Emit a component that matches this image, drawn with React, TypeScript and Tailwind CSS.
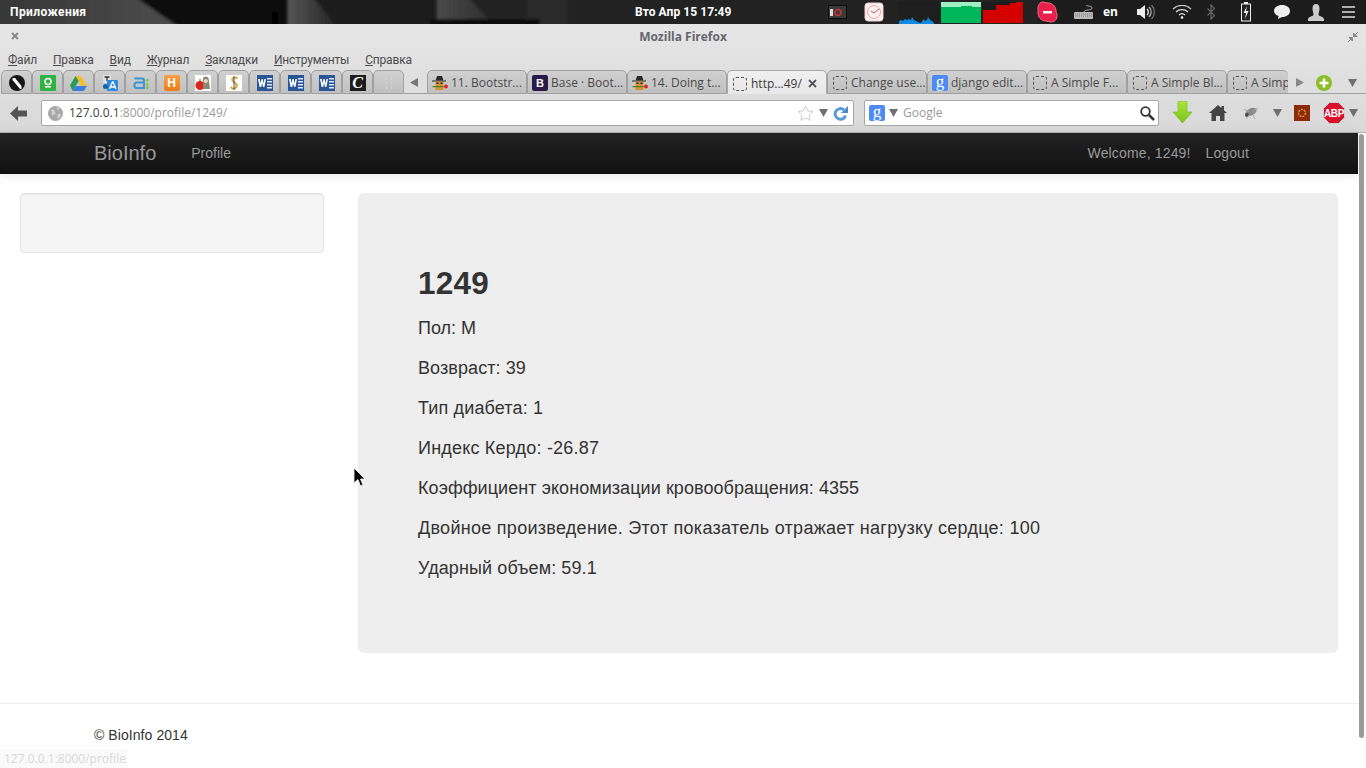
import React from "react";

const ui = { fontFamily: '"Open Sans", "Noto Sans", sans-serif' };
const cyr = { fontFamily: 'Roboto, "Noto Sans", sans-serif' };
const page = { fontFamily: '"Liberation Sans", Arial, sans-serif' };

function Dashed() {
  return (
    <div className="flex w-[16px] shrink-0 justify-center">
      <div className="h-[14px] w-[14px] rounded-[3px] border border-dashed border-[#555]" />
    </div>
  );
}

function Spy() {
  return (
    <svg width="16" height="16" viewBox="0 0 16 16" className="shrink-0">
      <path d="M0 5.500h14v1H0z" fill="#222" />
      <path d="M3.500 5.500L5 1h5l1.500 4.500z" fill="#2b2b2b" />
      <rect x="3.500" y="6.500" width="8" height="8.500" fill="#d69433" />
      <rect x="4.500" y="7.500" width="2" height="1.500" fill="#222" />
      <rect x="8.500" y="7.500" width="2" height="1.500" fill="#222" />
      <rect x="0.500" y="11" width="11" height="1.200" fill="#4c7a20" />
      <circle cx="14" cy="11.500" r="2" fill="#e8202c" />
    </svg>
  );
}

function GoogleIcon() {
  return (
    <div
      className="flex h-4 w-4 shrink-0 items-start justify-center rounded-[2px] bg-[#4c8bf5] text-[17px] leading-[13px] text-white"
      style={{ fontFamily: '"Liberation Serif", serif' }}
    >
      g
    </div>
  );
}

function WordIcon() {
  return (
    <svg width="16" height="16" viewBox="0 0 16 16">
      <rect x="0" y="0" width="16" height="16" fill="#2a5699" />
      <rect x="10" y="3" width="5" height="1.500" fill="#dfe8f5" />
      <rect x="10" y="6" width="5" height="1.500" fill="#dfe8f5" />
      <rect x="10" y="9" width="5" height="1.500" fill="#dfe8f5" />
      <rect x="10" y="12" width="5" height="1.500" fill="#dfe8f5" />
      <path d="M1 4h1.800l.8 4.500L4.500 4h1.200l.9 4.500L7.400 4H9l-1.600 8H6L5.100 8 4.200 12H2.600z" fill="#fff" />
    </svg>
  );
}

const pinnedIcons = [
  <svg width="16" height="16" viewBox="0 0 16 16"><circle cx="8" cy="8" r="8" fill="#161616" /><path d="M3.500 3h2.500l6.500 8v3h-1.500L3.500 5z" fill="#fff" /></svg>,
  <svg width="16" height="16" viewBox="0 0 16 16"><rect width="16" height="16" rx="1" fill="#2fb344" /><circle cx="8" cy="6.500" r="3" fill="none" stroke="#fff" strokeWidth="1.500" /><rect x="5" y="11" width="6" height="1.500" fill="#fff" /></svg>,
  <svg width="17" height="15" viewBox="0 0 17 15"><path d="M5.500 0h5.500l6 10h-5.500z" fill="#f6c02c" /><path d="M5.500 0L0 9.500 2.700 15l6-10z" fill="#2c9a55" /><path d="M2.700 15h11l3.300-5H5.800z" fill="#3c7be0" /></svg>,
  <svg width="16" height="16" viewBox="0 0 16 16"><rect x="1" y="0" width="8" height="8" fill="#e4e4e4" /><path d="M2.500 2h5M5 2v4" stroke="#333" strokeWidth="1.300" /><rect x="5" y="5" width="11" height="11" rx="1" fill="#2a8ae0" /><path d="M7.500 14l3-7h.5l3 7M9 12h4" stroke="#fff" strokeWidth="1.300" fill="none" /><circle cx="3.500" cy="11.500" r="2.500" fill="#1a5fa8" /></svg>,
  <svg width="16" height="14" viewBox="0 0 16 14"><path d="M1.500 2.500h7.500a2 2 0 0 1 2 2V12H3.500a2 2 0 0 1-2-2V8.500a2 2 0 0 1 2-2H11" fill="none" stroke="#3d94d6" strokeWidth="2" /><rect x="13" y="3" width="2.500" height="2.500" fill="#8cbf3f" /><rect x="13" y="7" width="2.500" height="2.500" fill="#8cbf3f" /><rect x="13" y="10.500" width="2.500" height="2.500" fill="#8cbf3f" /></svg>,
  <div className="flex h-4 w-4 items-center justify-center rounded-[2px] bg-gradient-to-b from-[#f9a040] to-[#ef7a1a] text-[12px] font-bold leading-none text-white" style={page}>H</div>,
  <svg width="16" height="16" viewBox="0 0 16 16"><rect width="16" height="16" fill="#fff" /><circle cx="5" cy="10.500" r="4.500" fill="#d8281e" /><path d="M8 3a3.200 3.200 0 0 1 5.500 0l1.500 11H8z" fill="#8d8478" /><circle cx="10.800" cy="6" r="2" fill="#e8dcc8" /><path d="M5 6v-2" stroke="#3a7a20" /></svg>,
  <svg width="16" height="16" viewBox="0 0 16 16"><rect width="16" height="16" fill="#fff" /><path d="M11.500 3.500C9 1.500 5.500 3 6.500 5.500S12 8 10.500 11.500 6 14 4.500 12" fill="none" stroke="#d2ac20" strokeWidth="2" /><path d="M8 1v14" stroke="#5a3f9c" /></svg>,
  <WordIcon />,
  <WordIcon />,
  <WordIcon />,
  <div className="flex h-4 w-4 items-center justify-center bg-[#1c1c1c] text-[16px] font-bold italic leading-none text-white" style={{ fontFamily: '"Liberation Serif", serif' }}>C</div>,
  <div className="h-3 w-[6px] border-x border-dashed border-[#d4d4d4]" />,
];

const tabs = [
  { title: "11. Bootstr...", icon: <Spy /> },
  { title: "Base · Boot...", icon: <div className="flex h-4 w-4 shrink-0 items-center justify-center rounded-[2px] bg-[#2a1a4a] text-[11px] font-bold leading-none text-white" style={page}>B</div> },
  { title: "14. Doing t...", icon: <Spy /> },
  { title: "http...49/", icon: <Dashed />, active: true },
  { title: "Change use...", icon: <Dashed /> },
  { title: "django edit...", icon: <GoogleIcon /> },
  { title: "A Simple F...", icon: <Dashed /> },
  { title: "A Simple Bl...", icon: <Dashed /> },
];

function Tab({ title, icon, active }: { title: string; icon: React.ReactNode; active?: boolean }) {
  return (
    <div
      className={
        active
          ? "flex h-[24px] w-[100px] shrink-0 items-center gap-[3px] rounded-t-[5px] border border-b-0 border-[#a8a8a8] bg-gradient-to-b from-[#f0f0f0] to-[#e8e8e8] pl-[4px] pt-[2px] text-[12px] text-[#3c3c3c]"
          : "flex h-[24px] w-[100px] shrink-0 items-center gap-[3px] rounded-t-[5px] border border-[#a0a0a0] bg-gradient-to-b from-[#d0d0d0] to-[#c0c0c0] pl-[4px] pt-[2px] text-[12px] text-[#4a4a4a]"
      }
    >
      {icon}
      <span className="whitespace-nowrap">{title}</span>
      {active && (
        <svg className="ml-auto mr-[9px]" width="9" height="9" viewBox="0 0 9 9">
          <path d="M1 1l7 7M8 1L1 8" stroke="#555" strokeWidth="1.800" />
        </svg>
      )}
    </div>
  );
}

function Wallpaper() {
  return (
    <svg className="absolute inset-0" width="1366" height="24" viewBox="0 0 1366 24" preserveAspectRatio="none">
      <defs>
        <linearGradient id="g1" x1="0" x2="1" y1="0" y2="0">
          <stop offset="0" stopColor="#363636" />
          <stop offset="1" stopColor="#4c4c4c" />
        </linearGradient>
        <linearGradient id="g2" x1="0" x2="1" y1="0" y2="0">
          <stop offset="0" stopColor="#555" />
          <stop offset="1" stopColor="#222" />
        </linearGradient>
        <linearGradient id="g3" x1="0" x2="1" y1="0" y2="0">
          <stop offset="0" stopColor="#4a4a4a" />
          <stop offset="1" stopColor="#2a2a2a" />
        </linearGradient>
        <filter id="soft">
          <feGaussianBlur stdDeviation="1.500" />
        </filter>
      </defs>
      <rect width="1366" height="24" fill="#222" />
      <g filter="url(#soft)">
        <path d="M-4 -4h138l46 32H-4z" fill="url(#g1)" />
        <path d="M134 -4h154v32H180z" fill="#101010" />
        <path d="M288 -4h24l26 32h-50z" fill="url(#g2)" />
        <path d="M312 -4h125v32H338z" fill="#1a1a1a" />
        <path d="M437 -4h30l30 32h-60z" fill="url(#g3)" />
        <path d="M467 -4h60v32h-30z" fill="#232323" />
        <rect x="527" y="-4" width="40" height="32" fill="#2a2a2a" />
        <rect x="272" y="12" width="6" height="14" fill="#050505" />
        <rect x="430" y="19" width="110" height="8" fill="#111" />
        <rect x="1040" y="-4" width="330" height="32" fill="#1c1c1c" />
      </g>
    </svg>
  );
}

function TopBar() {
  return (
    <div className="relative flex h-[24px] shrink-0 items-center text-[12px] font-bold text-white" style={cyr}>
      <Wallpaper />
      <span className="relative ml-[10px] w-[625px] tracking-[0.4px]">Приложения</span>
      <span className="relative w-[193px] whitespace-nowrap tracking-[0.07px]">Вто Апр 15 17:49</span>

      <svg className="relative" width="20" height="14" viewBox="0 0 20 14">
        <rect x="0.500" y="0.500" width="18" height="13" fill="#3a3a3a" stroke="#0c0c0c" />
        <rect x="2" y="4" width="3" height="7" fill="#ddd" />
        <circle cx="10" cy="7.500" r="3" fill="none" stroke="#d03030" strokeWidth="1.500" />
      </svg>
      <svg className="relative ml-[16px]" width="20" height="20" viewBox="0 0 20 20">
        <rect x="1" y="1" width="18" height="18" rx="3" fill="#fbf2f2" stroke="#eecccc" />
        <circle cx="10" cy="10" r="6.500" fill="none" stroke="#e8a0a0" />
        <path d="M10 11l5-4M10 11l-3-2" stroke="#c55" />
      </svg>

      <svg className="relative ml-[15px]" width="40" height="23" viewBox="0 0 40 23">
        <rect width="40" height="23" fill="#1e1e1e" />
        <path d="M0 23v-3l2-1 2 1 2-2 2 1 2-1 2 1 1-3 2 3 2 1 2 1 2 1 2-1 1-3 2 2 2-1 1-3 2 3 2 1 2 2v2z" fill="#0f8ae0" />
      </svg>
      <svg className="relative ml-[2px]" width="40" height="21" viewBox="0 0 40 21">
        <rect width="40" height="21" fill="#00b65a" />
        <path d="M0 0h40v5H31v-1H20v1H0z" fill="#9ef0c4" />
      </svg>
      <svg className="relative ml-[2px]" width="40" height="21" viewBox="0 0 40 21">
        <rect width="40" height="21" fill="#d40000" />
        <path d="M0 0h27v3H13v5H0z" fill="#1c1c1c" />
        <path d="M27 0h6v1H27z" fill="#1c1c1c" />
      </svg>

      <svg className="relative ml-[14px]" width="21" height="22" viewBox="0 0 21 22">
        <path d="M6 1c2 0 3 1 5 1 5 0 8 4 8 8 0 1 1 2 1 5 0 3-2 6-6 6-2 0-3-1-5-1-5 0-8-4-8-8 0-1 0-2 0-5 0-3 2-6 5-6z" fill="#e8204a" stroke="#f56a80" />
        <rect x="6" y="10" width="9" height="2.500" fill="#fff" />
      </svg>
      <svg className="relative ml-[16px]" width="20" height="16" viewBox="0 0 20 16">
        <rect y="8" width="19" height="7" rx="1" fill="#bbb" />
        <path d="M1 10h17M1 12h17" stroke="#555" strokeWidth="0.700" strokeDasharray="1 1" />
        <path d="M10 8c0-3 8-1 8-4s-5-1-6-3" fill="none" stroke="#aaa" />
      </svg>
      <span className="relative ml-[9px] w-[14px]" style={ui}>en</span>

      <svg className="relative ml-[20px]" width="18" height="16" viewBox="0 0 18 16">
        <path d="M0 5h3l5-4v14l-5-4H0z" fill="#eee" />
        <path d="M10 5a4 4 0 0 1 0 6" fill="none" stroke="#eee" strokeWidth="1.300" />
        <path d="M12 3a7 7 0 0 1 0 10" fill="none" stroke="#bbb" strokeWidth="1.200" />
        <path d="M14.500 1a10 10 0 0 1 0 14" fill="none" stroke="#777" strokeWidth="1.200" />
      </svg>
      <svg className="relative ml-[17px]" width="20" height="14" viewBox="0 0 20 14">
        <path d="M1 4a13 13 0 0 1 18 0" fill="none" stroke="#ccc" strokeWidth="1.300" />
        <path d="M4 7a9 9 0 0 1 12 0" fill="none" stroke="#ddd" strokeWidth="1.300" />
        <path d="M7 10a4.500 4.500 0 0 1 6 0" fill="none" stroke="#eee" strokeWidth="1.300" />
        <circle cx="10" cy="12.500" r="1.300" fill="#fff" />
      </svg>
      <svg className="relative ml-[15px]" width="8" height="16" viewBox="0 0 8 16">
        <path d="M0.500 4.500l7 7L4 15V1l3.500 3.500-7 7" fill="none" stroke="#666" strokeWidth="1.200" />
      </svg>
      <svg className="relative ml-[26px]" width="10" height="20" viewBox="0 0 10 20">
        <rect x="3" y="0" width="4" height="2" fill="#eee" />
        <rect x="0.500" y="2" width="9" height="17" fill="#222" stroke="#eee" />
        <path d="M6 4L2.500 11H5l-1 6 3.500-8H5z" fill="#eee" />
      </svg>
      <svg className="relative ml-[23px]" width="16" height="14" viewBox="0 0 16 14">
        <path d="M8 0c4.500 0 8 2.500 8 6s-3.500 6-8 6l-4 2 .5-3C2 10 0 8.500 0 6c0-3.500 3.500-6 8-6z" fill="#eee" />
      </svg>
      <svg className="relative ml-[18px]" width="16" height="17" viewBox="0 0 16 17">
        <path d="M8 0c2.500 0 3.500 2 3.500 4.500S10.500 9 10.500 11c1 1.500 5.500 1.500 5.500 4.500V17H0v-1.500C0 12.500 4.500 12.500 5.500 11 5.500 9 4.500 7 4.500 4.500S5.500 0 8 0z" fill="#ccc" />
      </svg>
      <svg className="relative ml-[18px]" width="13" height="12" viewBox="0 0 13 12">
        <path d="M0 1h13M0 6h13M0 11h13" stroke="#ddd" strokeWidth="1.500" />
      </svg>
    </div>
  );
}

function Drop({ className }: { className?: string }) {
  return (
    <svg className={className} width="9" height="8" viewBox="0 0 9 8">
      <path d="M0 0h9L4.500 8z" fill="#707070" />
    </svg>
  );
}

function BrowserChrome() {
  return (
    <div className="h-[109px] shrink-0 border-b border-[#b4b4b4] bg-gradient-to-b from-[#e6e6e6] to-[#d9d9d9] text-[#4a4a4a]" style={ui}>
      <div className="relative flex h-[25px] items-center justify-center text-[12px] font-bold text-[#66666e]">
        <svg className="absolute left-[11px] top-[8px]" width="8" height="8" viewBox="0 0 8 8">
          <path d="M1 1l6 6M7 1L1 7" stroke="#888" strokeWidth="2" />
        </svg>
        Mozilla Firefox
        <svg className="absolute right-[8px] top-[8px]" width="10" height="10" viewBox="0 0 10 10">
          <path d="M0 10l3-3M1 5.500h3.500V9L1 5.500zM10 0L7 3M5.500 1v3.500H9L5.500 1z" stroke="#888" fill="#888" />
        </svg>
      </div>

      <div className="flex h-[21px] items-center gap-4 pl-[8px] text-[12px] tracking-[-0.18px] text-[#4c4c4c]" style={cyr}>
        <span><u>Ф</u>айл</span>
        <span><u>П</u>равка</span>
        <span><u>В</u>ид</span>
        <span><u>Ж</u>урнал</span>
        <span><u>З</u>акладки</span>
        <span><u>И</u>нструменты</span>
        <span><u>С</u>правка</span>
      </div>

      <div className="flex h-[24px] items-end pl-[1px]">
        {pinnedIcons.map((icon, i) => (
          <div
            key={i}
            className="flex h-[24px] w-[31px] shrink-0 items-center justify-center rounded-t-[5px] border border-[#a0a0a0] bg-gradient-to-b from-[#d0d0d0] to-[#c0c0c0] pt-[2px]"
          >
            {icon}
          </div>
        ))}
        <div className="flex h-[24px] w-[23px] shrink-0 items-center justify-center border-b border-[#a0a0a0] pr-[4px] pt-[2px]">
          <svg width="8" height="9" viewBox="0 0 8 9"><path d="M8 0v9L0 4.500z" fill="#777" /></svg>
        </div>
        {tabs.map((t) => (
          <Tab key={t.title} {...t} />
        ))}
        <div className="flex h-[24px] w-[61px] shrink-0 items-center gap-[3px] overflow-hidden rounded-t-[5px] border border-r-0 border-[#a0a0a0] bg-gradient-to-b from-[#d0d0d0] to-[#c0c0c0] pl-[4px] pt-[2px] text-[12px] text-[#4a4a4a]">
          <Dashed />
          <span className="whitespace-nowrap">A Simple</span>
        </div>
        <div className="flex h-[24px] flex-1 items-center border-b border-[#a0a0a0] pt-[2px]">
          <svg className="ml-[8px]" width="8" height="9" viewBox="0 0 8 9"><path d="M0 0v9l8-4.500z" fill="#888" /></svg>
          <svg className="ml-[12px]" width="16" height="16" viewBox="0 0 16 16">
            <circle cx="8" cy="8" r="8" fill="#8cbf26" />
            <path d="M8 3.500v9M3.500 8h9" stroke="#fff" strokeWidth="2.500" />
          </svg>
          <Drop className="ml-[16px]" />
        </div>
      </div>

      <div className="flex h-[38px] items-center">
        <svg className="ml-[10px]" width="17" height="15" viewBox="0 0 17 15">
          <path d="M8 0L0 7.500 8 15v-4.500h9v-6H8z" fill="#555" />
        </svg>
        <div className="ml-[14px] flex h-[26px] w-[813px] items-center rounded-[2px] border border-[#a6a6a6] bg-white pl-[6px] text-[12px]">
          <svg width="15" height="15" viewBox="0 0 14 14"><circle cx="7" cy="7" r="7" fill="#a8a8a8" /><path d="M3 3l3 1 1 3-3 2zM9 8l3-1-1 4-2 1zM8 1l3 1-2 2z" fill="#d4d4d4" /></svg>
          <span className="ml-[6px] text-[#3c3c3c]">127.0.0.1</span>
          <span className="text-[#999]">:8000/profile/1249/</span>
          <svg className="ml-auto" width="17" height="16" viewBox="0 0 17 16">
            <path d="M8.500 1l2.300 4.800 5.200.7-3.800 3.600.9 5.200-4.600-2.500-4.600 2.500.9-5.200L1 6.500l5.200-.7z" fill="#fff" stroke="#ccc" />
          </svg>
          <Drop className="ml-[5px]" />
          <svg className="ml-[5px] mr-[5px]" width="15" height="15" viewBox="0 0 15 15">
            <path d="M12.500 9.500a5.300 5.300 0 1 1-1.600-5.600" fill="none" stroke="#5b9bd5" strokeWidth="3" />
            <path d="M8 7h7V0z" fill="#4a8ccc" />
          </svg>
        </div>
        <div className="ml-[10px] flex h-[26px] w-[295px] items-center rounded-[2px] border border-[#a6a6a6] bg-white pl-[4px] text-[12px] text-[#999]">
          <GoogleIcon />
          <Drop className="ml-[4px]" />
          <span className="ml-[5px]">Google</span>
          <svg className="ml-auto mr-[3px]" width="15" height="15" viewBox="0 0 15 15">
            <circle cx="5.500" cy="5.500" r="4.300" fill="none" stroke="#333" strokeWidth="1.800" />
            <path d="M9 9l5 5" stroke="#333" strokeWidth="2.500" />
          </svg>
        </div>
        <svg className="ml-[14px]" width="19" height="24" viewBox="0 0 19 24">
          <defs>
            <linearGradient id="ga" x1="0" x2="0" y1="0" y2="1">
              <stop offset="0" stopColor="#a8e840" />
              <stop offset="1" stopColor="#7cc414" />
            </linearGradient>
          </defs>
          <path d="M5 0h9v11h5l-9.500 11L0 11h5z" fill="url(#ga)" stroke="#6fa810" strokeWidth="0.500" />
        </svg>
        <svg className="ml-[17px]" width="18" height="16" viewBox="0 0 18 16">
          <path d="M9 0L0 8h2.500v8h4.500v-5h4v5h4.500V8H18l-3-2.700V1h-2.500v2z" fill="#444" />
        </svg>
        <svg className="ml-[16px]" width="16" height="14" viewBox="0 0 16 14">
          <ellipse cx="8.500" cy="6" rx="6" ry="3.500" fill="#8a8a8a" transform="rotate(-25 8 7)" />
          <circle cx="4" cy="9" r="2" fill="#444" />
          <path d="M1 3l5 3M15 2l-5 3M3 13l3-4M12 13l-2-4" stroke="#aaa" />
        </svg>
        <Drop className="ml-[14px]" />
        <svg className="ml-[12px]" width="16" height="16" viewBox="0 0 16 16">
          <rect width="16" height="16" fill="#8c2a0a" />
          <circle cx="8" cy="8" r="3.500" fill="none" stroke="#dc9a30" strokeWidth="1.500" strokeDasharray="2 1" />
        </svg>
        <div className="relative ml-[13px] h-[22px] w-[22px]">
          <svg width="22" height="22" viewBox="0 0 22 22">
            <path d="M6.500 0.500h9l6 6v9l-6 6h-9l-6-6v-9z" fill="#d8102a" stroke="#ccc" />
          </svg>
          <span className="absolute inset-0 flex items-center justify-center text-[10px] font-bold tracking-[-0.3px] text-white" style={page}>ABP</span>
        </div>
        <Drop className="ml-[4px]" />
      </div>
    </div>
  );
}

function Fact({ children, className }: { children: React.ReactNode; className?: string }) {
  return <p className={"mb-[10px] text-[18px] leading-[30px] text-[#333] " + (className ?? "")}>{children}</p>;
}

function SitePage() {
  return (
    <div className="relative flex min-h-0 flex-1 bg-white" style={page}>
      <div className="flex w-[1358px] flex-col">
        <div className="flex h-[41px] items-center bg-gradient-to-b from-[#222222] to-[#111111] shadow-[0_1px_10px_rgba(0,0,0,0.1)]">
          <span className="mb-[2px] ml-[94px] text-[20px] text-[#999]">BioInfo</span>
          <span className="ml-[35px] text-[14px] text-[#999]">Profile</span>
          <span className="ml-auto text-[14px] tracking-[0.15px] text-[#999]">Welcome, 1249!</span>
          <span className="ml-[15px] mr-[109px] text-[14px] tracking-[0.1px] text-[#999]">Logout</span>
        </div>

        <div className="mt-[19px] flex items-start pl-[20px]">
          <div className="h-[60px] w-[304px] rounded-[4px] border border-[#e3e3e3] bg-[#f5f5f5] shadow-[inset_0_1px_1px_rgba(0,0,0,0.05)]" />
          <div className="ml-[34px] h-[460px] w-[980px] rounded-[6px] bg-[#eeeeee] p-[60px]">
            <h2 className="my-[10px] text-[31.500px] font-bold leading-[40px] tracking-[0.25px] text-[#333]">1249</h2>
            <Fact>Пол: М</Fact>
            <Fact className="tracking-[0.08px]">Возвраст: 39</Fact>
            <Fact className="tracking-[0.14px]">Тип диабета: 1</Fact>
            <Fact className="tracking-[0.2px]">Индекс Кердо: -26.87</Fact>
            <Fact className="tracking-[0.065px]">Коэффициент экономизации кровообращения: 4355</Fact>
            <Fact className="tracking-[0.28px]">Двойное произведение. Этот показатель отражает нагрузку сердце: 100</Fact>
            <Fact className="tracking-[0.1px]">Ударный объем: 59.1</Fact>
          </div>
        </div>

        <div className="mt-[50px] border-t border-[#eeeeee] pl-[94px] pt-[23px] text-[14px] leading-[16px] tracking-[0.07px] text-[#333]">
          © BioInfo 2014
        </div>
      </div>

      <div className="w-[8px] shrink-0 pl-[1px] pt-[1px]">
        <div className="h-[604px] w-[5px] rounded-full bg-[#9a9a9a]" />
      </div>

      {/* status popup */}
      <div className="absolute bottom-0 left-0 flex h-[19px] w-[127px] items-center overflow-hidden whitespace-nowrap bg-[#fafafa] pl-[4px] text-[12px] text-[#d8d8d8]" style={ui}>
        127.0.0.1:8000/profile/1249/
      </div>

      {/* mouse pointer */}
      <svg className="absolute left-[353px] top-[334px]" width="13" height="20" viewBox="0 0 13 20">
        <path d="M1 1v15l4-3.500L7.500 19l2.500-1-2.500-6H12z" fill="#000" stroke="#fff" strokeWidth="0.800" />
      </svg>
    </div>
  );
}

export default function App() {
  return (
    <div className="flex h-[768px] w-[1366px] flex-col overflow-hidden">
      <TopBar />
      <BrowserChrome />
      <SitePage />
    </div>
  );
}
